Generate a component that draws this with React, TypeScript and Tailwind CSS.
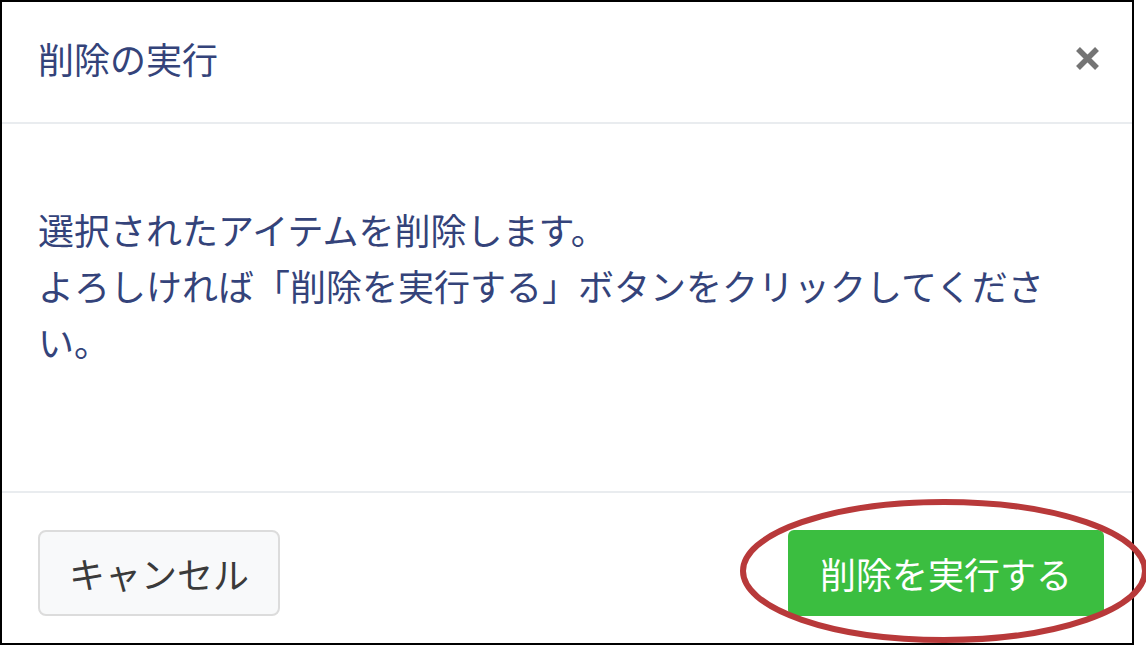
import React from 'react'

const font = { fontFamily: '"Noto Sans CJK JP", "Noto Sans", sans-serif' }

export default function App() {
  return (
    <div className="relative w-[1146px] h-[645px] bg-white" style={font}>
      <div className="w-[1134px] h-[645px] border-2 border-black flex flex-col">
        <div className="h-[122px] shrink-0 flex items-start justify-between pl-[36px] pr-[31px] pt-[29px] border-b-2 border-[#e9ecef]">
          <h5 className="text-[36px] leading-[54px] text-[#34437a]">削除の実行</h5>
          <button className="mt-[14px] w-[27px] h-[27px] flex items-center justify-center">
            <svg width="27" height="27" viewBox="0 0 27 27">
              <path d="M4 4 L23 23 M23 4 L4 23" stroke="#747474" strokeWidth="5.5" strokeLinecap="butt" />
            </svg>
          </button>
        </div>
        <div className="h-[367px] shrink-0 pl-[36px] pr-[34px] pt-[77px]">
          <p className="text-[36px] leading-[56px] text-[#34437a]">
            選択されたアイテムを削除します。
            <br />
            よろしければ「削除を実行する」ボタンをクリックしてください。
          </p>
        </div>
        <div className="flex-1 border-t-2 border-[#e9ecef] flex items-start justify-between pl-[36px] pr-[28px] pt-[37px]">
          <button className="w-[242px] h-[86px] rounded-[8px] border-2 border-[#dcdcdc] bg-[#f8f9fa] text-[36px] text-[#3a3a3a]">
            キャンセル
          </button>
          <button className="w-[316px] h-[86px] rounded-[6px] bg-[#3bbe40] text-[36px] text-white">
            削除を実行する
          </button>
        </div>
      </div>
      <svg className="absolute left-0 top-0 pointer-events-none" width="1146" height="645" viewBox="0 0 1146 645">
        <ellipse cx="944" cy="571" rx="201" ry="69" fill="none" stroke="#b8393a" strokeWidth="6" />
      </svg>
    </div>
  )
}
